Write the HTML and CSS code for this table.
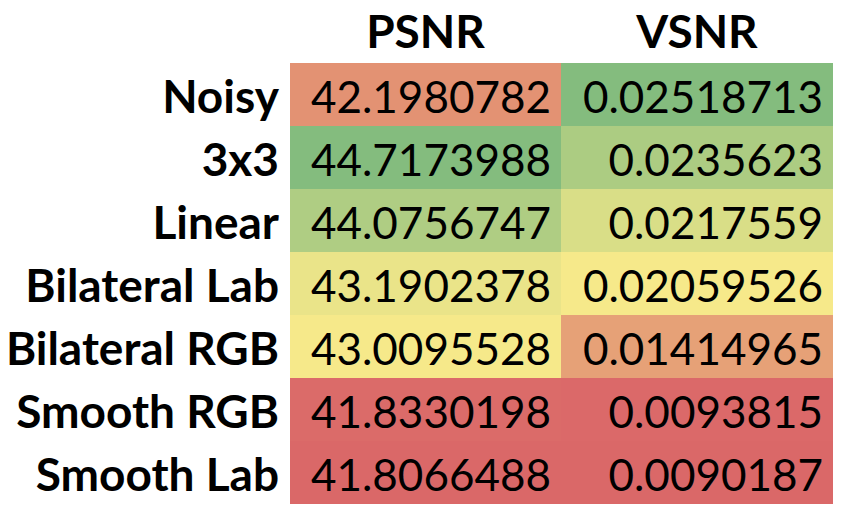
FILE: index.html
```html
<!DOCTYPE html>
<html>
<head>
<meta charset="utf-8">
<link rel="stylesheet" href="styles.css">
</head>
<body>
<div class="table">
  <div class="corner"></div>
  <div class="head">PSNR</div>
  <div class="head">VSNR</div>

  <div class="label">Noisy</div>
  <div class="num c-p1">42.1980782</div>
  <div class="num c-v1">0.02518713</div>

  <div class="label">3x3</div>
  <div class="num c-p2">44.7173988</div>
  <div class="num c-v2">0.0235623</div>

  <div class="label">Linear</div>
  <div class="num c-p3">44.0756747</div>
  <div class="num c-v3">0.0217559</div>

  <div class="label">Bilateral Lab</div>
  <div class="num c-p4">43.1902378</div>
  <div class="num c-v4">0.02059526</div>

  <div class="label">Bilateral RGB</div>
  <div class="num c-p5">43.0095528</div>
  <div class="num c-v5">0.01414965</div>

  <div class="label">Smooth RGB</div>
  <div class="num c-p6">41.8330198</div>
  <div class="num c-v6">0.0093815</div>

  <div class="label">Smooth Lab</div>
  <div class="num c-p7">41.8066488</div>
  <div class="num c-v7">0.0090187</div>
</div>
</body>
</html>
```
FILE: styles.css
```css
html, body {
  margin: 0;
  padding: 0;
  background: #ffffff;
}
.table {
  display: grid;
  grid-template-columns: 290px 271px 272px;
  grid-auto-rows: 63px;
  font-family: Lato, "Open Sans", sans-serif;
  color: #000;
}
.head, .label {
  font-weight: 700;
  font-size: 46px;
}
.head {
  display: flex;
  align-items: center;
  justify-content: center;
  padding-bottom: 2px;
}
.label {
  display: flex;
  align-items: center;
  justify-content: flex-end;
  padding-right: 11px;
  padding-top: 2px;
}
.num {
  display: flex;
  align-items: center;
  justify-content: flex-end;
  padding-right: 10px;
  padding-top: 2px;
  font-size: 44px;
  font-weight: 400;
}
.c-p1 { background: #e39273; }
.c-v1 { background: #84bc7e; }
.c-p2 { background: #84bc7e; }
.c-v2 { background: #accc82; }
.c-p3 { background: #afcd83; }
.c-v3 { background: #d9de87; }
.c-p4 { background: #eae489; }
.c-v4 { background: #f6e98a; }
.c-p5 { background: #f6e98a; }
.c-v5 { background: #e6a177; }
.c-p6 { background: #db6b69; }
.c-v6 { background: #db6969; }
.c-p7 { background: #da6868; }
.c-v7 { background: #da6868; }
```
